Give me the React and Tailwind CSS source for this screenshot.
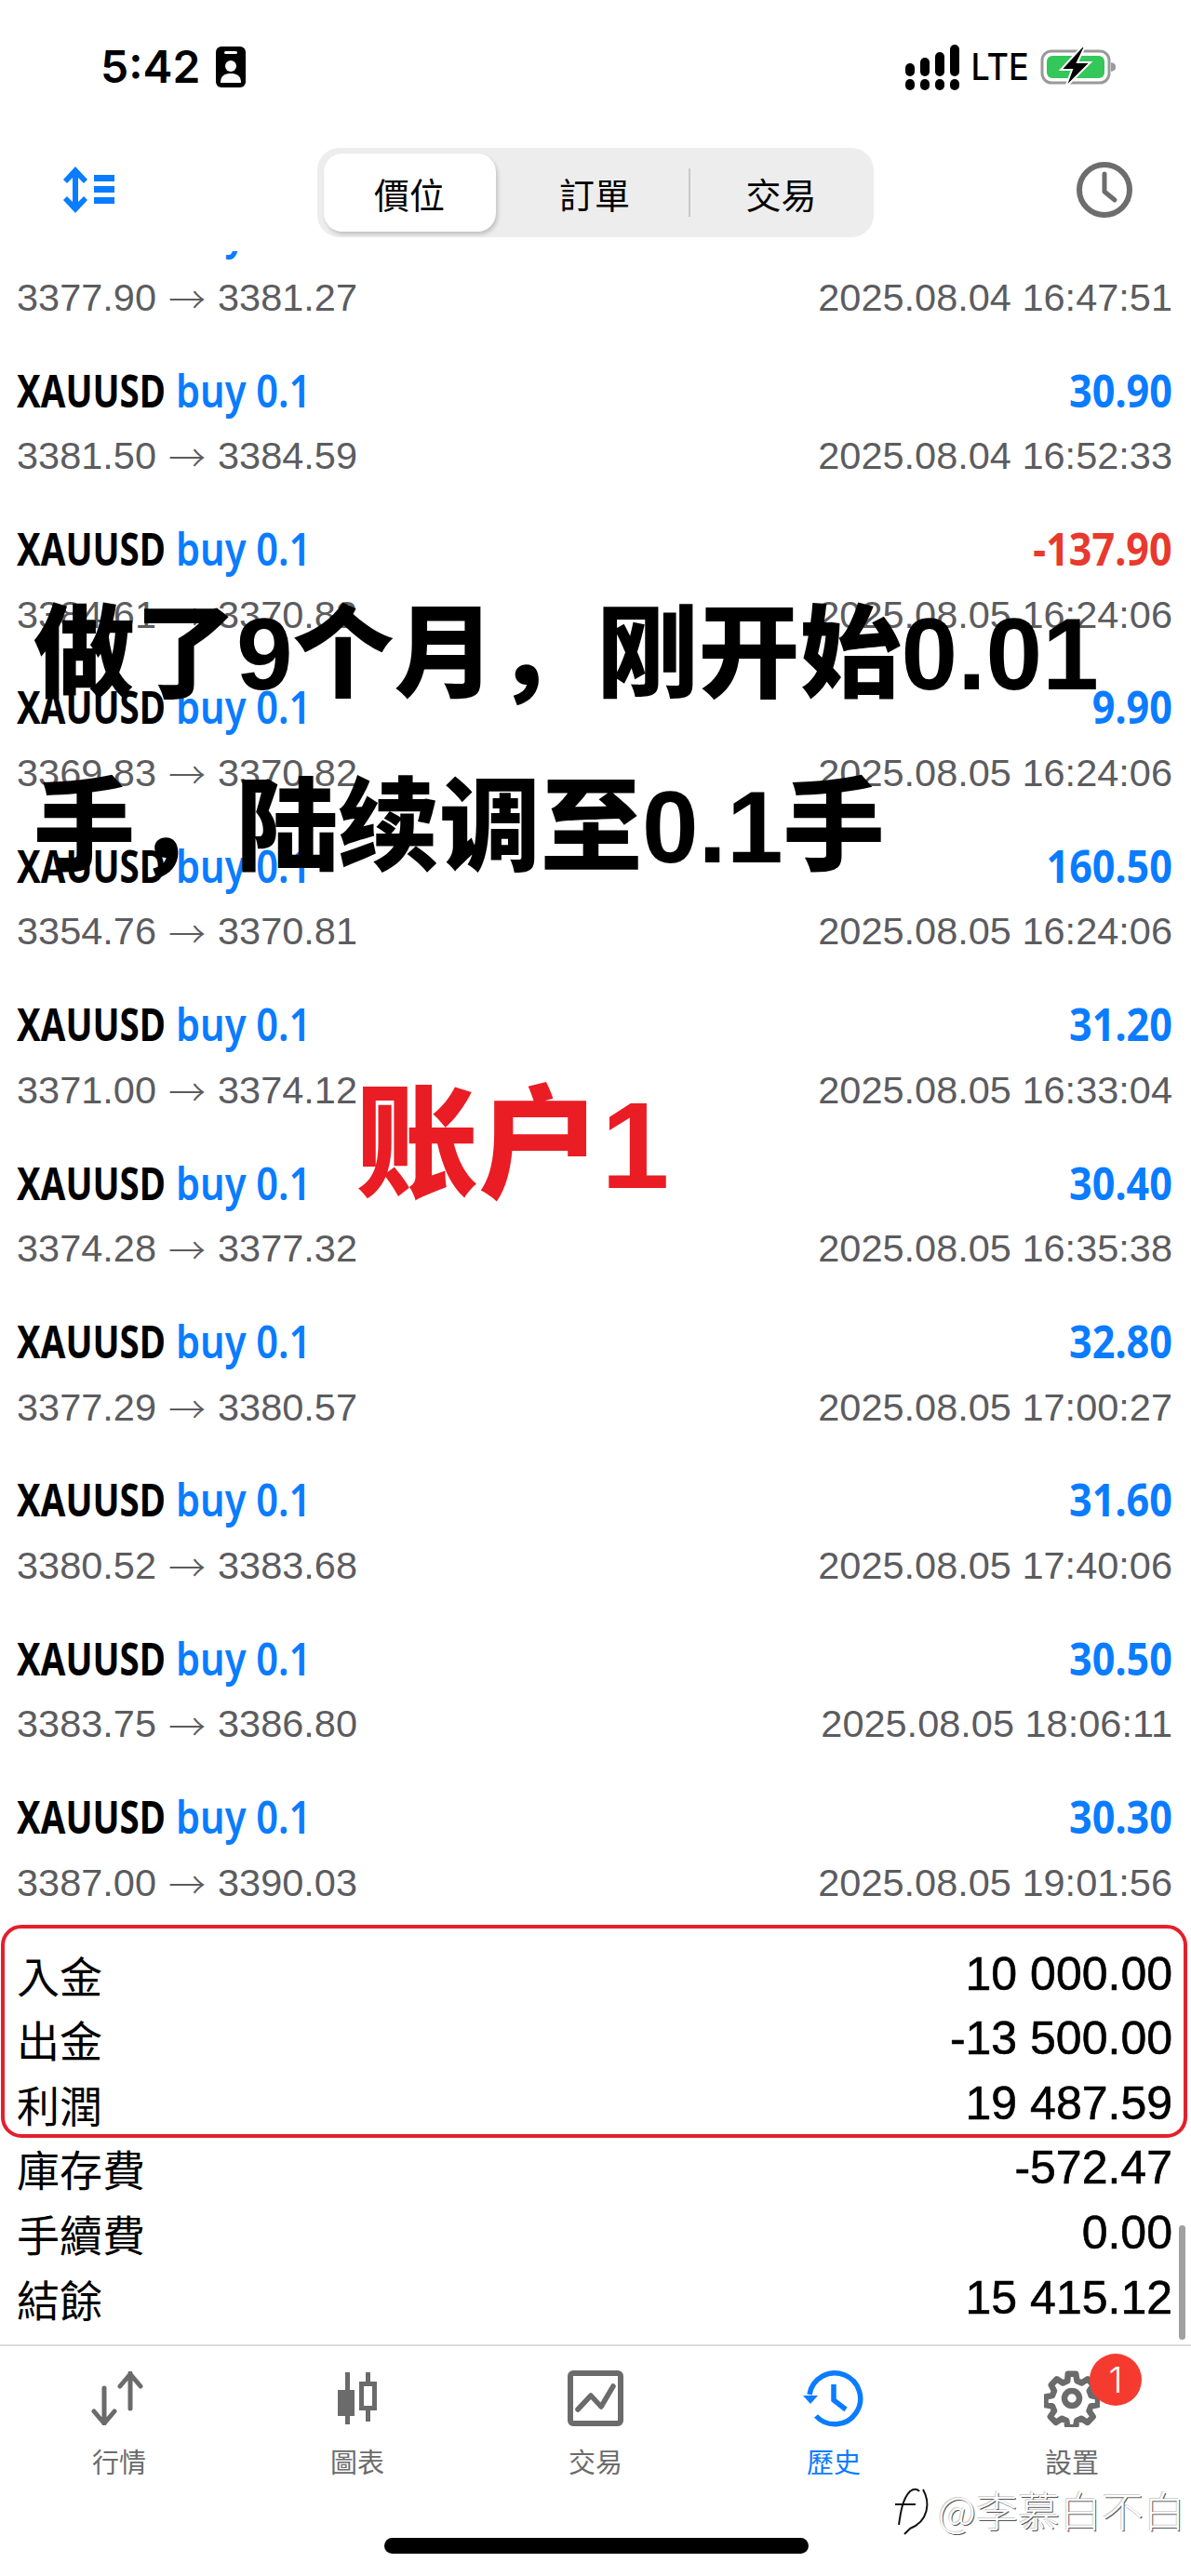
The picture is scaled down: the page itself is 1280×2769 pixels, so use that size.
const rows = [
  ['3377.90', '3381.27', '33.70', '2025.08.04 16:47:51'],
  ['3381.50', '3384.59', '30.90', '2025.08.04 16:52:33'],
  ['3384.61', '3370.82', '-137.90', '2025.08.05 16:24:06'],
  ['3369.83', '3370.82', '9.90', '2025.08.05 16:24:06'],
  ['3354.76', '3370.81', '160.50', '2025.08.05 16:24:06'],
  ['3371.00', '3374.12', '31.20', '2025.08.05 16:33:04'],
  ['3374.28', '3377.32', '30.40', '2025.08.05 16:35:38'],
  ['3377.29', '3380.57', '32.80', '2025.08.05 17:00:27'],
  ['3380.52', '3383.68', '31.60', '2025.08.05 17:40:06'],
  ['3383.75', '3386.80', '30.50', '2025.08.05 18:06:11'],
  ['3387.00', '3390.03', '30.30', '2025.08.05 19:01:56'],
]

const summary = [
  ['入金', '10 000.00'],
  ['出金', '-13 500.00'],
  ['利潤', '19 487.59'],
  ['庫存費', '-572.47'],
  ['手續費', '0.00'],
  ['結餘', '15 415.12'],
]

const cjk = "font-['Noto_Sans_CJK_TC',sans-serif]"

function TradeRow({ row }) {
  const [open, close, profit, time] = row
  return (
    <div className="h-[170.4px] px-[18px] pr-[20px] flex flex-col">
      <div className="mt-[16px] h-[68px] flex items-center justify-between font-['Noto_Sans',sans-serif] text-[49px]">
        <div className="flex items-center whitespace-nowrap">
          <span className="w-[171px] origin-left scale-x-[0.785] font-bold text-black">XAUUSD</span>
          <span className="origin-left scale-x-[0.85] font-semibold text-[#0a7cff]">buy 0.1</span>
        </div>
        <div className={`origin-right scale-x-[0.88] font-bold ${profit.startsWith('-') ? 'text-[#e8392e]' : 'text-[#0a7cff]'}`}>{profit}</div>
      </div>
      <div className="mt-[11px] h-[52px] flex items-center justify-between font-['Liberation_Sans',sans-serif] text-[41.5px] text-[#5c5c5f]">
        <div className="flex items-center whitespace-nowrap">
          <span>{open}</span>
          <span className={`w-[66px] text-center text-[40px] font-light ${cjk}`}>→</span>
          <span>{close}</span>
        </div>
        <div className="whitespace-nowrap">{time}</div>
      </div>
    </div>
  )
}

function Signal() {
  const tall = [14, 20, 26, 34]
  return (
    <div className="flex items-end gap-[6px]">
      {tall.map((h, i) => (
        <div key={i} className="flex flex-col gap-[3px] w-[10px]">
          <div className="bg-black rounded-full" style={{ height: h }} />
          <div className="bg-black rounded-full h-[12px]" />
        </div>
      ))}
    </div>
  )
}

function Battery() {
  return (
    <svg width="84" height="44" viewBox="0 0 84 44">
      <rect x="2" y="5" width="72" height="34" rx="10" fill="none" stroke="#9a9a9a" strokeWidth="3" />
      <rect x="7" y="10" width="62" height="24" rx="6" fill="#34c759" />
      <path d="M76 17c4 1 5 2 5 5s-1 4-5 5z" fill="#9a9a9a" />
      <path d="M45 0 22 25h12l-7 19 27-27H40l8-17z" fill="#000" stroke="#fff" strokeWidth="2" />
    </svg>
  )
}

function TabIcon({ name }) {
  if (name === 'quotes') {
    return (
      <svg width="64" height="58" viewBox="0 0 64 58" fill="none" stroke="#6b6b6b" strokeWidth="5" strokeLinecap="round" strokeLinejoin="round">
        <path d="M16 18v38M5 43l11 13 11-13" />
        <path d="M44 2v38M33 16 44 3l11 13" />
      </svg>
    )
  }
  if (name === 'chart') {
    return (
      <svg width="44" height="56" viewBox="0 0 44 56" fill="#6b6b6b">
        <rect x="9" y="0" width="5" height="56" />
        <rect x="1" y="19" width="18" height="28" />
        <path fillRule="evenodd" d="M31 0h5v10h7v31h-7v12h-5V41h-7V10h7zM29 15v21h9V15z" />
      </svg>
    )
  }
  if (name === 'trade') {
    return (
      <svg width="60" height="60" viewBox="0 0 60 60" fill="none" stroke="#6b6b6b" strokeLinecap="round" strokeLinejoin="round">
        <rect x="3" y="3" width="54" height="54" rx="3" strokeWidth="6" />
        <path d="M11 42 25 27l11 12 13-22" strokeWidth="5.5" />
      </svg>
    )
  }
  if (name === 'history') {
    return (
      <svg width="66" height="62" viewBox="0 0 66 62" fill="none" stroke="#0a7cff" strokeWidth="5.5">
        <path d="M7 27A27.5 27.5 0 1 1 14 50" />
        <path d="M0 28h16l-8 9z" fill="#0a7cff" stroke="none" />
        <path d="M33 16v17l13 10" strokeLinejoin="miter" />
      </svg>
    )
  }
  return (
    <svg width="60" height="62" viewBox="0 0 24 24" fill="none" stroke="#6b6b6b" strokeWidth="2.6" strokeLinejoin="round">
      <circle cx="12" cy="12" r="3.2" />
      <path d="M10.3 1.5h3.4l.5 3 2 .9 2.6-1.7 2.4 2.6-1.7 2.5.8 2-.1 0 3 .6v3.4l-3 .6-.8 2 1.7 2.5-2.4 2.5-2.6-1.7-2 .9-.5 2.9h-3.4l-.5-2.9-2-.9-2.6 1.7-2.4-2.5 1.7-2.5-.8-2-3-.6v-3.4l3-.6.8-2L3.1 6.3l2.4-2.6 2.6 1.7 2-.9z" />
    </svg>
  )
}

const tabs = [
  ['quotes', '行情'],
  ['chart', '圖表'],
  ['trade', '交易'],
  ['history', '歷史'],
  ['settings', '設置'],
]

export default function App() {
  return (
    <div className="relative w-[1280px] h-[2769px] bg-white overflow-hidden flex flex-col">
      <div className="h-[138px] shrink-0 pl-[108px] pr-[78px] pt-[6px] flex items-center justify-between">
        <div className="flex items-center gap-[17px]">
          <span className="font-['Inter',sans-serif] text-[48px] font-semibold text-black leading-none">5:42</span>
          <svg width="32" height="44" viewBox="0 0 32 44">
            <rect width="32" height="44" rx="6" fill="#000" />
            <rect x="9" y="5" width="14" height="3" rx="1.5" fill="#fff" />
            <circle cx="16" cy="21" r="6" fill="#fff" />
            <path d="M5 39c0-8 5-10 11-10s11 2 11 10z" fill="#fff" />
          </svg>
        </div>
        <div className="flex items-center gap-[12px]">
          <Signal />
          <span className="origin-center scale-x-[0.9] -mx-[3px] font-['Inter',sans-serif] text-[40px] font-medium text-black leading-none">LTE</span>
          <Battery />
        </div>
      </div>

      <div className="h-[132px] shrink-0 pl-[67px] pr-[62px] flex items-center justify-between">
        <svg width="56" height="50" viewBox="0 0 56 50" fill="#0a7cff">
          <path d="M14 0l13 14-4 4-6-6v26l6-6 4 4-13 14L1 36l4-4 6 6V12l-6 6-4-4z" />
          <rect x="34" y="9" width="22" height="7" />
          <rect x="34" y="21" width="22" height="7" />
          <rect x="34" y="33" width="22" height="7" />
        </svg>
        <div className={`mt-[6px] w-[598px] h-[96px] rounded-[24px] bg-[#ededed] flex items-center px-[7px] text-[38px] text-black ${cjk}`}>
          <div className="w-[185px] h-[84px] rounded-[20px] bg-white shadow-[2px_3px_4px_rgba(0,0,0,0.18)] flex items-center justify-center">價位</div>
          <div className="w-[207px] pl-[6px] h-[84px] flex items-center justify-center">訂單</div>
          <div className="w-[2px] h-[52px] bg-[#c9c9c9]" />
          <div className="flex-1 pl-[6px] h-[84px] flex items-center justify-center">交易</div>
        </div>
        <svg width="62" height="62" viewBox="0 0 62 62" fill="none" stroke="#6d6d6d" strokeWidth="6">
          <circle cx="31" cy="31" r="27" />
          <path d="M31 14v19l11 9" strokeLinecap="round" strokeLinejoin="round" strokeWidth="5" />
        </svg>
      </div>

      <div className="flex-1 min-h-0 overflow-hidden relative">
        <div className="-mt-[71px]">
          {rows.map((row, i) => <TradeRow key={i} row={row} />)}
        </div>
        <div className="mt-[14px]">
          {summary.map(([label, value]) => (
            <div key={label} className="h-[69.6px] pl-[18px] pr-[20px] flex items-center justify-between text-black">
              <span className={`text-[46px] ${cjk}`}>{label}</span>
              <span className="font-['Liberation_Sans',sans-serif] text-[50px] [-webkit-text-stroke:0.6px_black]">{value}</span>
            </div>
          ))}
        </div>
        <div className="absolute right-[6px] bottom-[5px] w-[7px] h-[123px] rounded-full bg-[#a0a0a0]" />
      </div>

      <div className="h-[249px] shrink-0 border-t-2 border-[#dcdcdc]">
        <div className="grid grid-cols-5 pt-[24px]">
          {tabs.map(([name, label]) => (
            <div key={name} className="relative flex flex-col items-center">
              <div className="h-[64px] flex items-center justify-center">
                <TabIcon name={name} />
              </div>
              <div className={`mt-[15px] text-[29px] leading-[40px] ${cjk} ${name === 'history' ? 'text-[#0a7cff]' : 'text-[#6b6b6b]'}`}>{label}</div>
              {name === 'settings' && (
                <div className="absolute left-[147px] top-[-16px] w-[56px] h-[56px] rounded-full bg-[#f53b30] text-white text-[38px] font-['Inter',sans-serif] font-light flex items-center justify-center">1</div>
              )}
            </div>
          ))}
        </div>
      </div>

      <div className="absolute left-[413px] top-[2728px] w-[456px] h-[17px] rounded-full bg-black" />

      <div className="absolute left-[958px] top-[2664px] flex items-center gap-[6px]">
        <svg width="44" height="60" viewBox="0 0 44 60" fill="none" stroke="#111" strokeWidth="2">
          <path d="M8 46c2-14 4-28 12-36 4-3 8-3 10 0M4 24h22M34 8c8 14 6 34-14 42l-6 6" />
        </svg>
        <span className={`text-[45px] font-light text-white [text-shadow:1px_1px_0_#555,-1px_-1px_0_#cfcfcf] ${cjk}`}>@李慕白不白</span>
      </div>

      <div className="absolute left-[36px] top-[610px] font-['Liberation_Sans','Noto_Sans_CJK_SC',sans-serif] text-[109px] font-black text-black leading-[186px] w-[1220px]">
        <div className="whitespace-nowrap">做了9个月，刚开始0.01</div>
        <div className="whitespace-nowrap">手，陆续调至0.1手</div>
      </div>
      <div className="absolute left-[382px] top-[1142px] font-['Liberation_Sans','Noto_Sans_CJK_SC',sans-serif] text-[132px] font-black text-[#ea1c24] leading-[180px]">账户1</div>

      <div className="absolute left-[1px] top-[2069px] w-[1275px] h-[229px] border-[4px] border-[#e4202c] rounded-[22px]" />
    </div>
  )
}
